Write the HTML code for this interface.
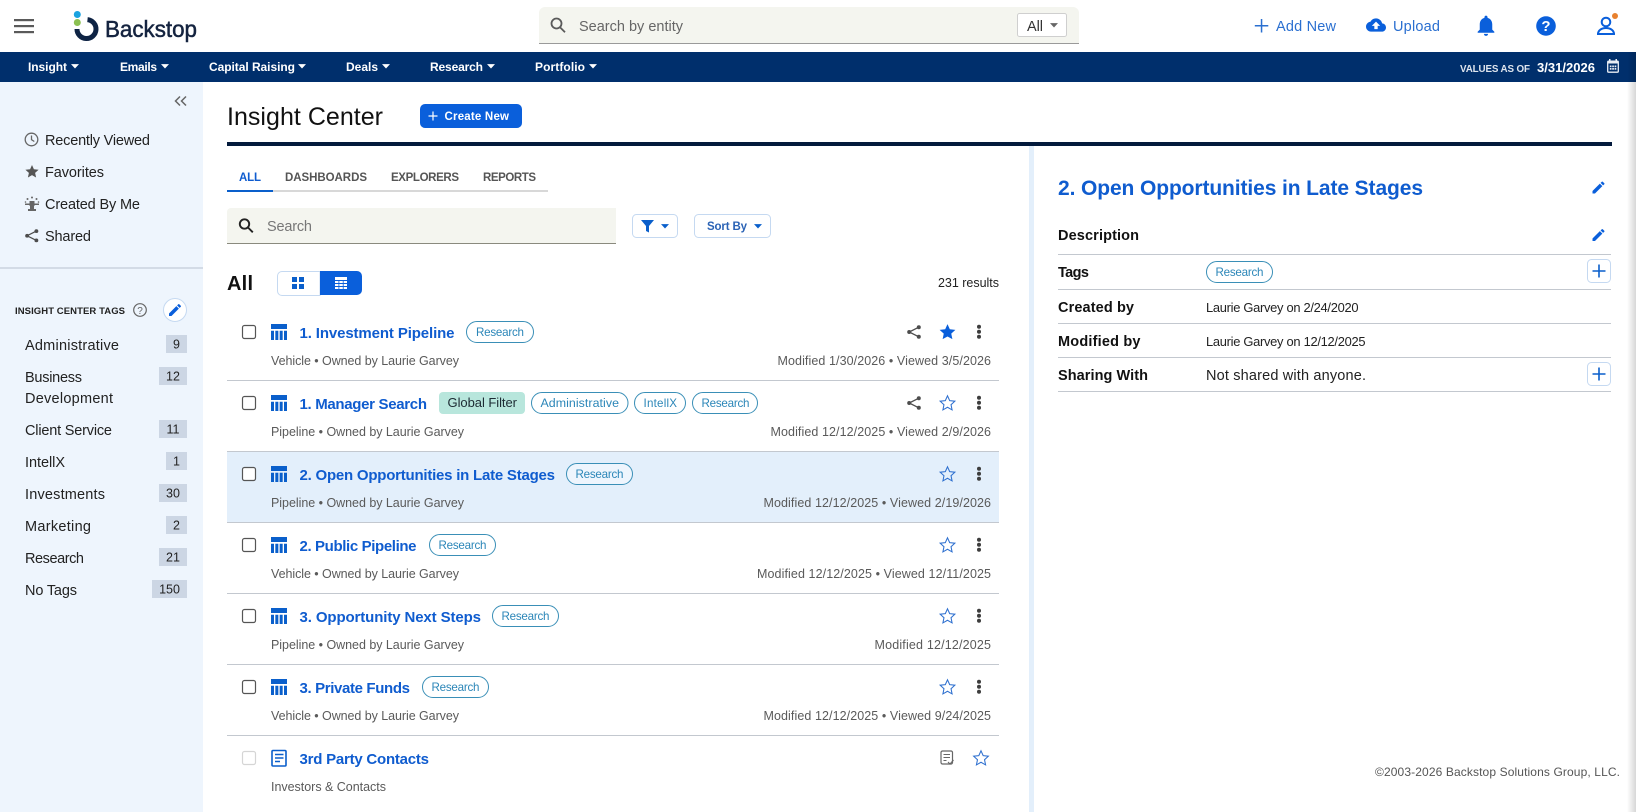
<!DOCTYPE html>
<html lang="en">
<head>
<meta charset="utf-8">
<title>Insight Center</title>
<style>
html,body{margin:0;padding:0;width:1636px;height:812px;overflow:hidden;background:#fff}
svg{display:block}
text{font-family:"Liberation Sans",sans-serif;white-space:pre}
.t{font-size:15px;font-weight:700;fill:#0f5ccf}
.s{font-size:12.5px;fill:#5a5a5a}
.p{font-size:11.6px;fill:#2b86b8}
.n{font-size:12px;font-weight:700;fill:#fff}
.m{font-size:14.5px;fill:#222}
.g{font-size:14.5px;fill:#222}
.b{font-size:12.5px;fill:#222;text-anchor:middle}
.l{font-size:14.5px;font-weight:700;fill:#111}
.v{font-size:12.9px;fill:#222}
.tb{font-size:11.5px;font-weight:700;fill:#555}
</style>
</head>
<body>
<svg xmlns="http://www.w3.org/2000/svg" width="1636" height="812" viewBox="0 0 1636 812">
<defs>
<linearGradient id="sh" x1="0" x2="1" y1="0" y2="0"><stop offset="0" stop-color="#000" stop-opacity="0"/><stop offset="1" stop-color="#000" stop-opacity=".16"/></linearGradient>
<symbol id="star" viewBox="0 0 24 24"><path d="M12 2.400l2.900 6.400 6.900.8-5.100 4.700 1.400 6.900-6.100-3.500-6.100 3.500 1.400-6.900-5.100-4.700 6.900-.8z" fill="none" stroke="#2d6fcf" stroke-width="1.400" stroke-linejoin="miter"/></symbol>
<symbol id="starf" viewBox="0 0 24 24"><path d="M12 1.500l3.100 6.800 7.400.9-5.500 5 1.500 7.300L12 18l-6.500 3.500 1.500-7.300-5.500-5 7.400-.9z" fill="#0a5fdb"/></symbol>
<symbol id="share" viewBox="0 0 14 14"><g fill="#4d4d4d"><circle cx="11.800" cy="2.200" r="2"/><circle cx="11.800" cy="11.800" r="2"/><circle cx="2.200" cy="7" r="2"/></g><path d="M11.800 2.200L2.200 7l9.600 4.800" fill="none" stroke="#4d4d4d" stroke-width="1.300"/></symbol>
<symbol id="keb" viewBox="0 0 6 16"><g fill="#3d3d3d"><circle cx="3" cy="2.700" r="2"/><circle cx="3" cy="7.700" r="2"/><circle cx="3" cy="12.700" r="2"/></g></symbol>
<symbol id="tbl" viewBox="0 0 16 16"><path d="M0 0h16v5H0zM0 6.800h3v9.200H0zM4.330 6.800h3v9.200h-3zM8.670 6.800h3v9.200h-3zM13 6.800h3v9.200h-3z" fill="#0a5fcb"/></symbol>
<symbol id="edit" viewBox="0 0 24 24"><path d="M3 17.250V21h3.750L17.810 9.940l-3.750-3.750L3 17.250zM20.710 7.040a1 1 0 0 0 0-1.410l-2.340-2.340a1 1 0 0 0-1.410 0l-1.830 1.830 3.750 3.750 1.830-1.830z" fill="#0a5fdb"/></symbol>
<symbol id="cup" viewBox="0 0 10 6"><path d="M0 0h10L5 5.500z" fill="currentColor"/></symbol>
</defs>

<!-- header -->
<rect width="1636" height="52" fill="#fff"/>
<g fill="#5a5a5a"><rect x="14" y="19" width="20" height="2.200"/><rect x="14" y="25" width="20" height="2.200"/><rect x="14" y="31" width="20" height="2.200"/></g>
<circle cx="77.300" cy="14.500" r="3.500" fill="#1ba3e0"/>
<circle cx="77.300" cy="22.500" r="3.500" fill="#8cc152"/>
<path d="M87.500 19.600A9.500 9.500 0 1 1 77 29" fill="none" stroke="#0e2344" stroke-width="5"/>
<text x="105" y="37" font-size="23" fill="#14233f" stroke="#14233f" stroke-width=".5" textLength="92" lengthAdjust="spacingAndGlyphs">Backstop</text>

<path d="M539 43V13a6 6 0 0 1 6-6h528a6 6 0 0 1 6 6v30z" fill="#f4f5ef"/>
<rect x="539" y="43" width="540" height="1" fill="#9a9a9a"/>
<g fill="none" stroke="#5a5a5a" stroke-width="1.800"><circle cx="556.500" cy="23.500" r="5"/><path d="M560 27.200l5 5"/></g>
<text x="579" y="31" font-size="14.5" fill="#666" textLength="104">Search by entity</text>
<rect x="1017.500" y="13.500" width="49" height="23" rx="2" fill="#fff" stroke="#cfcfcf"/>
<text x="1027" y="31" font-size="14.5" fill="#333" textLength="16">All</text>
<use href="#cup" x="1050" y="23" width="8" height="5" color="#666"/>

<g fill="#2a6fd0">
<path d="M1260.800 19h1.500v6h6v1.500h-6v6h-1.500v-6h-6V25h6z"/>
<text x="1276" y="31" font-size="14.5" textLength="60">Add New</text>
<text x="1393" y="31" font-size="14.5" textLength="47">Upload</text>
</g>
<svg x="1366" y="14" width="20" height="22" viewBox="0 0 24 24"><path d="M19.350 10.040C18.670 6.590 15.640 4 12 4 9.110 4 6.600 5.640 5.350 8.040 2.340 8.360 0 10.910 0 14c0 3.310 2.690 6 6 6h13c2.760 0 5-2.240 5-5 0-2.640-2.050-4.780-4.650-4.960zM14 13v4h-4v-4H7l5-5 5 5h-3z" fill="#0a5fdb"/></svg>
<svg x="1473.500" y="13" width="25" height="25" viewBox="0 0 24 24"><path d="M12 22c1.100 0 2-.9 2-2h-4c0 1.100.9 2 2 2zm6-6v-5c0-3.070-1.630-5.640-4.500-6.320V4c0-.83-.67-1.500-1.500-1.500s-1.500.67-1.500 1.500v.68C7.640 5.360 6 7.920 6 11v5l-2 2v1h16v-1l-2-2z" fill="#0a5fdb"/></svg>
<circle cx="1546" cy="26" r="9.800" fill="#0a5fdb"/>
<text x="1546" y="31" font-size="15" font-weight="700" fill="#fff" text-anchor="middle">?</text>
<g fill="none" stroke="#0a5fdb" stroke-width="2"><circle cx="1606" cy="22" r="4.300"/><path d="M1598 34c0-3.500 3.500-6 8-6s8 2.500 8 6z"/></g>
<rect x="1597" y="33" width="18" height="2" fill="#0a5fdb"/>
<circle cx="1615" cy="16" r="3" fill="#e8812f"/>

<!-- nav -->
<rect y="52" width="1636" height="30" fill="#002f6c"/>
<g color="#fff">
<text class="n" x="28" y="71" textLength="39">Insight</text><use href="#cup" x="71" y="64" width="8" height="5"/>
<text class="n" x="120" y="71" textLength="37">Emails</text><use href="#cup" x="161" y="64" width="8" height="5"/>
<text class="n" x="209" y="71" textLength="86">Capital Raising</text><use href="#cup" x="298" y="64" width="8" height="5"/>
<text class="n" x="346" y="71" textLength="32">Deals</text><use href="#cup" x="382" y="64" width="8" height="5"/>
<text class="n" x="430" y="71" textLength="53">Research</text><use href="#cup" x="487" y="64" width="8" height="5"/>
<text class="n" x="535" y="71" textLength="50">Portfolio</text><use href="#cup" x="589" y="64" width="8" height="5"/>
</g>
<text x="1460" y="72" font-size="9.800" font-weight="700" fill="#dfe5ee" textLength="70">VALUES AS OF</text>
<text x="1537" y="72" font-size="13" font-weight="700" fill="#fff" textLength="58">3/31/2026</text>
<rect x="1607.700" y="61.200" width="10.600" height="11" rx="1" fill="none" stroke="#e8edf4" stroke-width="1.300"/>
<g fill="#e8edf4"><rect x="1607.500" y="61" width="11" height="2.500"/><rect x="1609" y="59" width="1.500" height="3"/><rect x="1615.500" y="59" width="1.500" height="3"/><rect x="1609.800" y="65.500" width="1.700" height="1.700"/><rect x="1612.200" y="65.500" width="1.700" height="1.700"/><rect x="1614.600" y="65.500" width="1.700" height="1.700"/><rect x="1609.800" y="68" width="1.700" height="1.700"/><rect x="1612.200" y="68" width="1.700" height="1.700"/><rect x="1614.600" y="68" width="1.700" height="1.700"/></g>

<!-- sidebar -->
<rect y="82" width="203" height="730" fill="#eef5fd"/>
<rect y="267" width="203" height="2" fill="#d3dbe6"/>
<path d="M180 96.500l-4.500 4.500 4.500 4.500M186 96.500l-4.500 4.500 4.500 4.500" fill="none" stroke="#666" stroke-width="1.500"/>
<g fill="none" stroke="#666" stroke-width="1.300"><circle cx="31.500" cy="139.500" r="6.300"/><path d="M31.500 135.500v4.200l2.800 1.800"/></g>
<path d="M32 165l1.900 4.300 4.700.5-3.500 3.100 1 4.600-4.100-2.400-4.100 2.400 1-4.600-3.500-3.100 4.700-.5z" fill="#555"/>
<g fill="#666"><rect x="29.500" y="201" width="5" height="5"/><path d="M25 203.500h14v1.500h-5v4h2v2h-8v-2h2v-4h-5z"/><circle cx="32" cy="197.500" r="1"/><circle cx="27.500" cy="199" r="1"/><circle cx="36.500" cy="199" r="1"/><circle cx="25.500" cy="202" r=".8"/><circle cx="38.500" cy="202" r=".8"/></g>
<use href="#share" x="25" y="229" width="13.500" height="13.500"/>
<text class="m" x="45" y="145" textLength="105">Recently Viewed</text>
<text class="m" x="45" y="177" textLength="59">Favorites</text>
<text class="m" x="45" y="209" textLength="95">Created By Me</text>
<text class="m" x="45" y="241" textLength="46">Shared</text>

<text x="15" y="314" font-size="9.500" font-weight="700" fill="#222" textLength="110">INSIGHT CENTER TAGS</text>
<circle cx="140" cy="310" r="6.300" fill="none" stroke="#666" stroke-width="1.200"/>
<text x="140" y="314" font-size="10" fill="#666" text-anchor="middle">?</text>
<circle cx="175" cy="310" r="11.500" fill="#fff" stroke="#c5d9f1"/>
<use href="#edit" x="167" y="302" width="16" height="16"/>

<g fill="#ccd6e4">
<rect x="166" y="335" width="21" height="18"/><rect x="159" y="367" width="28" height="18"/><rect x="159" y="420" width="28" height="18"/><rect x="166" y="452" width="21" height="18"/><rect x="159" y="484" width="28" height="18"/><rect x="166" y="516" width="21" height="18"/><rect x="159" y="548" width="28" height="18"/><rect x="152" y="580" width="35" height="18"/>
</g>
<text class="g" x="25" y="350" textLength="94">Administrative</text><text class="b" x="176.500" y="348.500">9</text>
<text class="g" x="25" y="382" textLength="57">Business</text><text class="g" x="25" y="403" textLength="88">Development</text><text class="b" x="173" y="380.500">12</text>
<text class="g" x="25" y="435" textLength="87">Client Service</text><text class="b" x="173" y="433.500">11</text>
<text class="g" x="25" y="467" textLength="40">IntellX</text><text class="b" x="176.500" y="465.500">1</text>
<text class="g" x="25" y="499" textLength="80">Investments</text><text class="b" x="173" y="497.500">30</text>
<text class="g" x="25" y="531" textLength="66">Marketing</text><text class="b" x="176.500" y="529.500">2</text>
<text class="g" x="25" y="563" textLength="59">Research</text><text class="b" x="173" y="561.500">21</text>
<text class="g" x="25" y="595" textLength="52">No Tags</text><text class="b" x="169.500" y="593.500">150</text>

<!-- main heading -->
<text x="227" y="125" font-size="25" fill="#111" textLength="156">Insight Center</text>
<rect x="420" y="104" width="102" height="24" rx="5" fill="#0a5fdb"/>
<path d="M432.400 111.500h1.200v3.900h3.900v1.200h-3.900v3.900h-1.200v-3.900h-3.900v-1.200h3.900z" fill="#fff"/>
<text x="444.500" y="120" font-size="11.500" font-weight="700" fill="#fff" textLength="64.500">Create New</text>
<rect x="227" y="142" width="1385" height="4" fill="#031a3c"/>
<rect x="1029" y="146" width="5" height="666" fill="#e3effb"/>

<!-- tabs -->
<rect x="227" y="190" width="321" height="2" fill="#d8d8d8"/>
<rect x="227" y="190" width="46" height="2" fill="#0a5fcb"/>
<text class="tb" x="239" y="181" textLength="22" style="fill:#0f5ccf">ALL</text>
<text class="tb" x="285" y="181" textLength="82">DASHBOARDS</text>
<text class="tb" x="391" y="181" textLength="68">EXPLORERS</text>
<text class="tb" x="483" y="181" textLength="53">REPORTS</text>

<!-- search & filters -->
<path d="M227 243v-31a4 4 0 0 1 4-4h385v35z" fill="#f4f5ef"/>
<rect x="227" y="243" width="389" height="1" fill="#8a8a7e"/>
<g fill="none" stroke="#222" stroke-width="1.900"><circle cx="244.500" cy="224" r="4.700"/><path d="M248 227.500l4.800 4.800"/></g>
<text x="267" y="231" font-size="14.500" fill="#777" textLength="45">Search</text>
<rect x="632.500" y="214.500" width="45" height="23" rx="4" fill="#fff" stroke="#c5d9f1"/>
<path d="M641 220h13l-5 6v6.500l-3-1.500v-5z" fill="#0a5fcb"/>
<use href="#cup" x="661" y="224" width="8" height="5" color="#0a5fcb"/>
<rect x="694.500" y="214.500" width="76" height="23" rx="4" fill="#fff" stroke="#c5d9f1"/>
<text x="707" y="230" font-size="11.500" font-weight="700" fill="#2b63b5" textLength="40">Sort By</text>
<use href="#cup" x="754" y="224" width="8" height="5" color="#0a5fcb"/>

<!-- all + toggle -->
<text x="227" y="290" font-size="20" font-weight="700" fill="#111" textLength="26">All</text>
<path d="M320 271.500h-38a4.500 4.500 0 0 0-4.500 4.500v15a4.500 4.500 0 0 0 4.500 4.500h38z" fill="#fff" stroke="#c5d9f1"/>
<path d="M320 271h37a5 5 0 0 1 5 5v14a5 5 0 0 1-5 5h-37z" fill="#0a5fdb"/>
<g fill="#0a5fcb"><rect x="292" y="277" width="5" height="5"/><rect x="299" y="277" width="5" height="5"/><rect x="292" y="284" width="5" height="5"/><rect x="299" y="284" width="5" height="5"/></g>
<g fill="#fff"><rect x="335" y="277" width="12" height="3"/><rect x="335" y="281" width="3.500" height="2"/><rect x="339.300" y="281" width="3.500" height="2"/><rect x="343.600" y="281" width="3.400" height="2"/><rect x="335" y="284" width="3.500" height="2"/><rect x="339.300" y="284" width="3.500" height="2"/><rect x="343.600" y="284" width="3.400" height="2"/><rect x="335" y="287" width="3.500" height="2"/><rect x="339.300" y="287" width="3.500" height="2"/><rect x="343.600" y="287" width="3.400" height="2"/></g>
<text x="938" y="287" font-size="12.500" fill="#222" textLength="61">231 results</text>

<!-- rows -->
<rect x="227" y="451" width="772" height="72" fill="#e3effb"/>
<g fill="#c3c8cf"><rect x="227" y="380" width="772" height="1"/><rect x="227" y="451" width="772" height="1"/><rect x="227" y="522" width="772" height="1"/><rect x="227" y="593" width="772" height="1"/><rect x="227" y="664" width="772" height="1"/><rect x="227" y="735" width="772" height="1"/></g>

<g>
<rect x="242.500" y="325.500" width="13" height="13" rx="2" fill="#fff" stroke="#555" stroke-width="1.200"/>
<use href="#tbl" x="271" y="324" width="16" height="16"/>
<text class="t" x="299.500" y="338" textLength="155">1. Investment Pipeline</text>
<rect x="466.500" y="321.500" width="67" height="21" rx="10.500" fill="#fff" stroke="#3a8fb7"/>
<text class="p" x="476" y="336" textLength="48">Research</text>
<text class="s" x="271" y="365" textLength="188">Vehicle • Owned by Laurie Garvey</text>
<text class="s" x="777.500" y="365" textLength="213.500">Modified 1/30/2026 • Viewed 3/5/2026</text>
<use href="#share" x="907" y="325" width="14" height="14"/>
<use href="#starf" x="938.500" y="323" width="18" height="18"/>
<use href="#keb" x="976" y="324" width="6" height="16"/>
</g>

<g transform="translate(0,71)">
<rect x="242.500" y="325.500" width="13" height="13" rx="2" fill="#fff" stroke="#555" stroke-width="1.200"/>
<use href="#tbl" x="271" y="324" width="16" height="16"/>
<text class="t" x="299.500" y="338" textLength="127.500">1. Manager Search</text>
<rect x="439" y="321" width="86" height="22" rx="4" fill="#b8e6dc"/>
<text x="447.500" y="336" font-size="13" fill="#1d2b33" textLength="69.500">Global Filter</text>
<rect x="531.500" y="321.500" width="96.500" height="21" rx="10.500" fill="#fff" stroke="#3a8fb7"/>
<text class="p" x="540.500" y="336" textLength="78.500" style="font-size:12.400px">Administrative</text>
<rect x="634.500" y="321.500" width="51" height="21" rx="10.500" fill="#fff" stroke="#3a8fb7"/>
<text class="p" x="643.500" y="336" textLength="33.500">IntellX</text>
<rect x="692.500" y="321.500" width="65" height="21" rx="10.500" fill="#fff" stroke="#3a8fb7"/>
<text class="p" x="701.500" y="336" textLength="48">Research</text>
<text class="s" x="271" y="365" textLength="193">Pipeline • Owned by Laurie Garvey</text>
<text class="s" x="770.500" y="365" textLength="220.500">Modified 12/12/2025 • Viewed 2/9/2026</text>
<use href="#share" x="907" y="325" width="14" height="14"/>
<use href="#star" x="938.500" y="323" width="18" height="18"/>
<use href="#keb" x="976" y="324" width="6" height="16"/>
</g>

<g transform="translate(0,142)">
<rect x="242.500" y="325.500" width="13" height="13" rx="2" fill="#fff" stroke="#555" stroke-width="1.200"/>
<use href="#tbl" x="271" y="324" width="16" height="16"/>
<text class="t" x="299.500" y="338" textLength="255.500">2. Open Opportunities in Late Stages</text>
<rect x="566.500" y="321.500" width="66" height="21" rx="10.500" fill="#eef5fd" stroke="#3a8fb7"/>
<text class="p" x="575.500" y="336" textLength="48">Research</text>
<text class="s" x="271" y="365" textLength="193">Pipeline • Owned by Laurie Garvey</text>
<text class="s" x="763.500" y="365" textLength="227.500">Modified 12/12/2025 • Viewed 2/19/2026</text>
<use href="#star" x="938.500" y="323" width="18" height="18"/>
<use href="#keb" x="976" y="324" width="6" height="16"/>
</g>

<g transform="translate(0,213)">
<rect x="242.500" y="325.500" width="13" height="13" rx="2" fill="#fff" stroke="#555" stroke-width="1.200"/>
<use href="#tbl" x="271" y="324" width="16" height="16"/>
<text class="t" x="299.500" y="338" textLength="117">2. Public Pipeline</text>
<rect x="429.500" y="321.500" width="66" height="21" rx="10.500" fill="#fff" stroke="#3a8fb7"/>
<text class="p" x="438.500" y="336" textLength="48">Research</text>
<text class="s" x="271" y="365" textLength="188">Vehicle • Owned by Laurie Garvey</text>
<text class="s" x="757" y="365" textLength="234">Modified 12/12/2025 • Viewed 12/11/2025</text>
<use href="#star" x="938.500" y="323" width="18" height="18"/>
<use href="#keb" x="976" y="324" width="6" height="16"/>
</g>

<g transform="translate(0,284)">
<rect x="242.500" y="325.500" width="13" height="13" rx="2" fill="#fff" stroke="#555" stroke-width="1.200"/>
<use href="#tbl" x="271" y="324" width="16" height="16"/>
<text class="t" x="299.500" y="338" textLength="181.500">3. Opportunity Next Steps</text>
<rect x="492.500" y="321.500" width="66" height="21" rx="10.500" fill="#fff" stroke="#3a8fb7"/>
<text class="p" x="501.500" y="336" textLength="48">Research</text>
<text class="s" x="271" y="365" textLength="193">Pipeline • Owned by Laurie Garvey</text>
<text class="s" x="874.500" y="365" textLength="116.500">Modified 12/12/2025</text>
<use href="#star" x="938.500" y="323" width="18" height="18"/>
<use href="#keb" x="976" y="324" width="6" height="16"/>
</g>

<g transform="translate(0,355)">
<rect x="242.500" y="325.500" width="13" height="13" rx="2" fill="#fff" stroke="#555" stroke-width="1.200"/>
<use href="#tbl" x="271" y="324" width="16" height="16"/>
<text class="t" x="299.500" y="338" textLength="110.500">3. Private Funds</text>
<rect x="422.500" y="321.500" width="66" height="21" rx="10.500" fill="#fff" stroke="#3a8fb7"/>
<text class="p" x="431.500" y="336" textLength="48">Research</text>
<text class="s" x="271" y="365" textLength="188">Vehicle • Owned by Laurie Garvey</text>
<text class="s" x="763.500" y="365" textLength="227.500">Modified 12/12/2025 • Viewed 9/24/2025</text>
<use href="#star" x="938.500" y="323" width="18" height="18"/>
<use href="#keb" x="976" y="324" width="6" height="16"/>
</g>

<g transform="translate(0,426)">
<rect x="242.500" y="325.500" width="13" height="13" rx="2" fill="#fff" stroke="#d5d5d5" stroke-width="1.200"/>
<rect x="272" y="324.500" width="14" height="15.500" rx="1" fill="none" stroke="#0a5fcb" stroke-width="1.600"/>
<path d="M275 328.500h8.500M275 332h8.500M275 335.500h5" stroke="#0a5fcb" stroke-width="1.400"/>
<text class="t" x="299.500" y="338" textLength="129.500">3rd Party Contacts</text>
<text class="s" x="271" y="365" textLength="115">Investors &amp; Contacts</text>
<rect x="941" y="325" width="11.500" height="13" rx="1.500" fill="none" stroke="#666" stroke-width="1.200"/>
<path d="M943.500 328.500h6.500M943.500 331.500h6.500M943.500 334.500h3M948 336l2 2 3.500-4" fill="none" stroke="#666" stroke-width="1.100"/>
<use href="#star" x="972" y="323" width="18" height="18"/>
</g>

<!-- right panel -->
<text x="1058" y="195" font-size="21" font-weight="700" fill="#0f5ccf" textLength="365">2. Open Opportunities in Late Stages</text>
<use href="#edit" x="1590.500" y="179.500" width="16" height="16"/>
<text class="l" x="1058" y="240" textLength="81">Description</text>
<use href="#edit" x="1590.500" y="227" width="16" height="16"/>
<g fill="#c3c8cf"><rect x="1058" y="254" width="553" height="1"/><rect x="1058" y="289" width="553" height="1"/><rect x="1058" y="323" width="553" height="1"/><rect x="1058" y="357" width="553" height="1"/><rect x="1058" y="391" width="553" height="1"/></g>
<text class="l" x="1058" y="277" textLength="31">Tags</text>
<rect x="1206.500" y="261.500" width="66" height="21" rx="10.500" fill="#fff" stroke="#3a8fb7"/>
<text class="p" x="1215.500" y="276" textLength="48">Research</text>
<rect x="1587.500" y="259.500" width="23" height="23" rx="4" fill="#fff" stroke="#c5d9f1"/>
<path d="M1598.200 264.500h1.600v5.700h5.700v1.600h-5.700v5.700h-1.600v-5.700h-5.700v-1.600h5.700z" fill="#0a5fcb"/>
<text class="l" x="1058" y="312" textLength="76">Created by</text>
<text class="v" x="1206" y="312" textLength="152.500">Laurie Garvey on 2/24/2020</text>
<text class="l" x="1058" y="346" textLength="82.500">Modified by</text>
<text class="v" x="1206" y="346" textLength="159.500">Laurie Garvey on 12/12/2025</text>
<text class="l" x="1058" y="380" textLength="90">Sharing With</text>
<text class="v" x="1206" y="380" textLength="160" style="font-size:14.500px">Not shared with anyone.</text>
<rect x="1587.500" y="362.500" width="23" height="23" rx="4" fill="#fff" stroke="#c5d9f1"/>
<path d="M1598.200 367.500h1.600v5.700h5.700v1.600h-5.700v5.700h-1.600v-5.700h-5.700v-1.600h5.700z" fill="#0a5fcb"/>
<text x="1375" y="776" font-size="12" fill="#555" textLength="245">©2003-2026 Backstop Solutions Group, LLC.</text>

<rect x="1627" y="52" width="9" height="760" fill="url(#sh)"/>
</svg>
</body>
</html>
